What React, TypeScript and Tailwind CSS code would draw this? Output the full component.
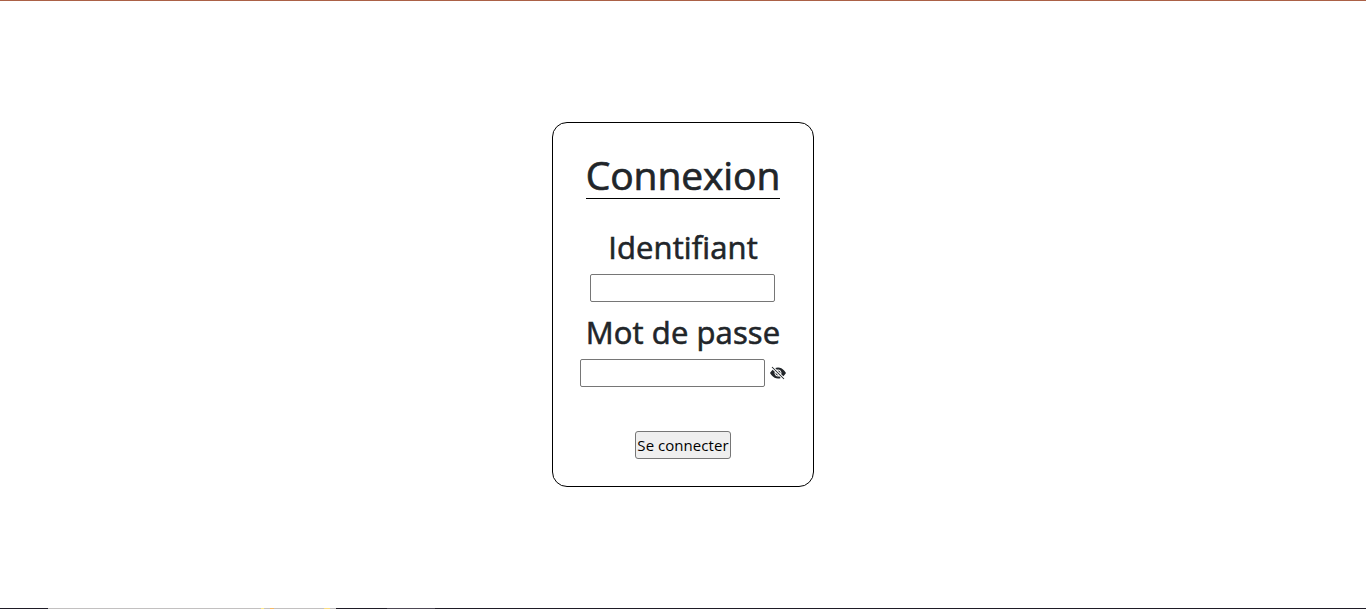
import { BsEyeSlashFill } from "react-icons/bs";

export default function App() {
  return (
    <div className="flex h-[609px] w-full flex-col overflow-hidden bg-white font-['Open_Sans','Noto_Sans',sans-serif] text-[#212529]">
      <div className="h-px shrink-0 bg-[#ab6146]" />
      <main className="flex flex-1 items-center justify-center">
        <form
          className="flex h-[365px] w-[262px] flex-col items-center rounded-[15px] border border-black pt-[27px]"
          onSubmit={(e) => e.preventDefault()}
        >
          <h1 className="flex h-[49px] w-[194px] justify-center border-b border-black text-[39px] leading-[50px] font-medium tracking-[-0.1px] whitespace-nowrap [-webkit-text-stroke:0.7px_#212529]">
            Connexion
          </h1>
          <h2 className="mt-[29px] h-[38px] text-[31px] leading-[38px] font-medium tracking-[0.1px] whitespace-nowrap [-webkit-text-stroke:0.6px_#212529]">
            Identifiant
          </h2>
          <input
            type="text"
            aria-label="Identifiant"
            className="mt-2 mr-px h-7 w-[185px] rounded-[2px] border border-[#767676] bg-white px-px"
          />
          <h2 className="mt-[11px] h-[38px] text-[31px] leading-[38px] font-medium tracking-[0.1px] whitespace-nowrap [-webkit-text-stroke:0.6px_#212529]">
            Mot de passe
          </h2>
          <div className="mt-2 flex items-center gap-[5px]">
            <input
              type="password"
              aria-label="Mot de passe"
              className="h-7 w-[185px] rounded-[2px] border border-[#767676] bg-white px-px"
            />
            <BsEyeSlashFill className="size-4" />
          </div>
          <button className="mt-11 flex h-7 w-24 justify-center rounded-[3px] border border-[#767676] bg-[#efefef] text-[15px] leading-[27px] tracking-[0.05px] whitespace-nowrap text-black">
            Se connecter
          </button>
        </form>
      </main>
      <div className="flex h-px shrink-0 bg-[#1f1c26]">
        <div className="w-12" />
        <div className="w-[213px] bg-[#c2c0c0]" />
        <div className="w-[3px] bg-[#ffe88a]" />
        <div className="w-[6px] bg-[#c2c0c0]" />
        <div className="w-[4px] bg-[#f4b765]" />
        <div className="w-[50px] bg-[#c2c0c0]" />
        <div className="w-[6px] bg-[#fbdc82]" />
        <div className="w-[6px] bg-[#c2c0c0]" />
        <div className="w-[51px]" />
        <div className="w-12 bg-[#4d4854]" />
      </div>
    </div>
  );
}
